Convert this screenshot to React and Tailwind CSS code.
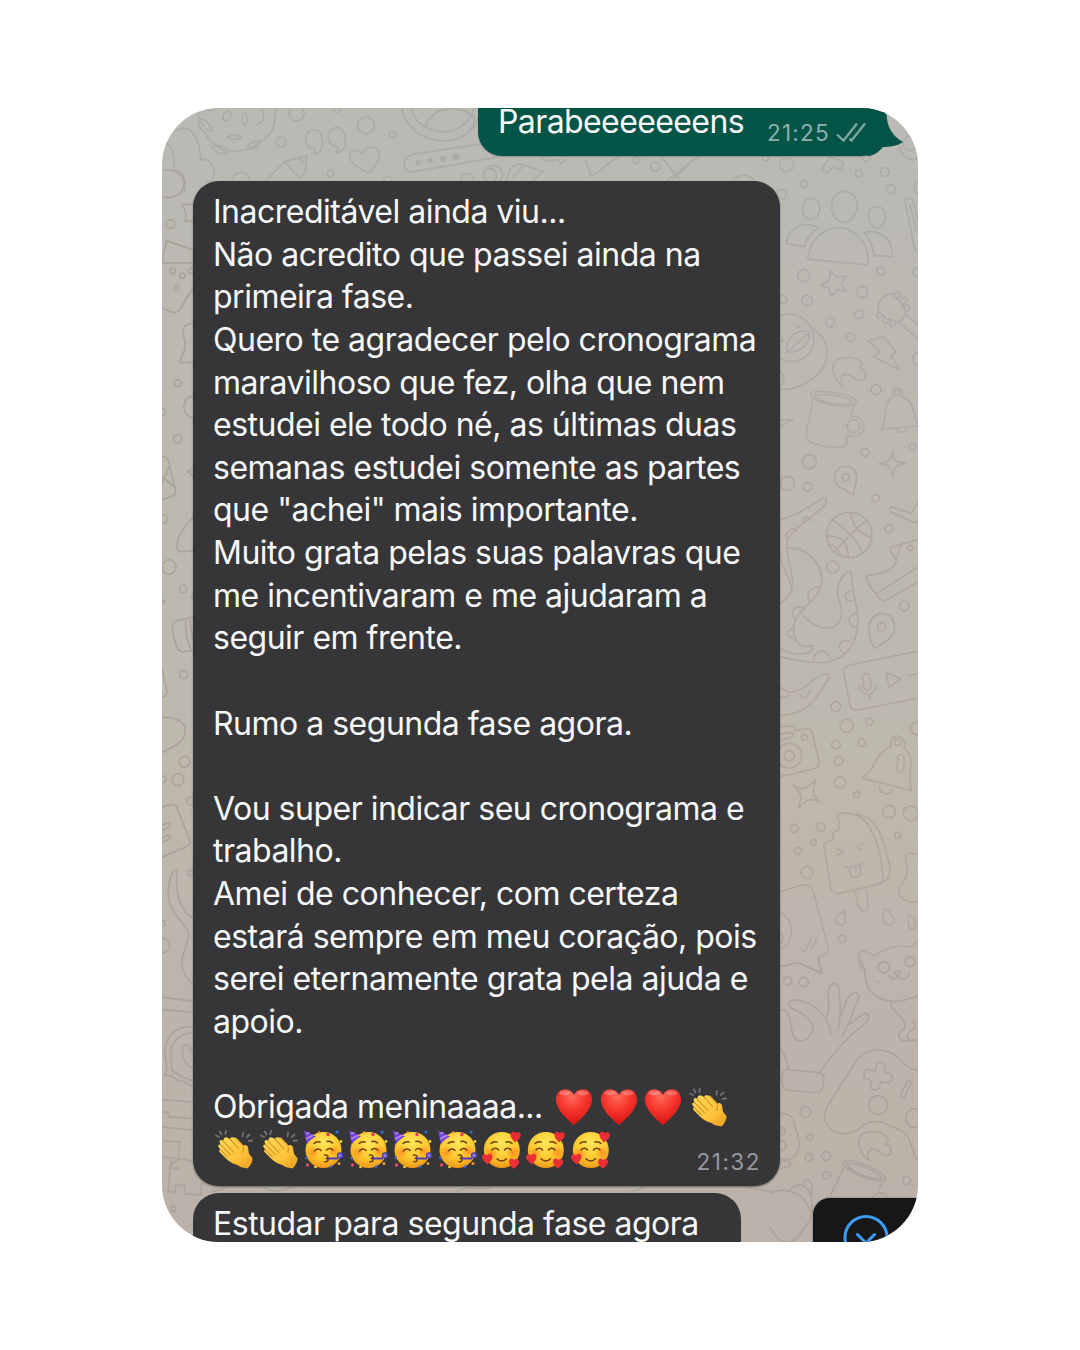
import React from "react";

const MESSAGE = [
  "Inacreditável ainda viu...",
  "Não acredito que passei ainda na",
  "primeira fase.",
  "Quero te agradecer pelo cronograma",
  "maravilhoso que fez, olha que nem",
  "estudei ele todo né, as últimas duas",
  "semanas estudei somente as partes",
  'que "achei" mais importante.',
  "Muito grata pelas suas palavras que",
  "me incentivaram e me ajudaram a",
  "seguir em frente.",
  "",
  "Rumo a segunda fase agora.",
  "",
  "Vou super indicar seu cronograma e",
  "trabalho.",
  "Amei de conhecer, com certeza",
  "estará sempre em meu coração, pois",
  "serei eternamente grata pela ajuda e",
  "apoio.",
  "",
];

function EmojiDefs() {
  return (
    <svg className="absolute h-0 w-0" aria-hidden="true">
      <defs>
        <radialGradient id="heartFill" cx="0.45" cy="0.2" r="0.85">
          <stop offset="0" stopColor="#ff6a5c" />
          <stop offset="0.45" stopColor="#f6352c" />
          <stop offset="1" stopColor="#cf0f10" />
        </radialGradient>
        <radialGradient id="faceFill" cx="0.5" cy="0.3" r="0.72">
          <stop offset="0" stopColor="#ffe65a" />
          <stop offset="0.6" stopColor="#fdc92f" />
          <stop offset="1" stopColor="#ee9418" />
        </radialGradient>
        <radialGradient id="blush">
          <stop offset="0" stopColor="#ff7a1c" stopOpacity="0.75" />
          <stop offset="1" stopColor="#ff8a1c" stopOpacity="0" />
        </radialGradient>
        <linearGradient id="handFill" x1="0" y1="0" x2="1" y2="1">
          <stop offset="0" stopColor="#ffd95a" />
          <stop offset="0.65" stopColor="#fcc23a" />
          <stop offset="1" stopColor="#e99a1c" />
        </linearGradient>
        <path
          id="heartShape"
          d="M19 37.5C15 33 1 23 1 11.5C1 5.5 5 1.3 10 1.3C14 1.3 17.300 3.500 19 7C20.700 3.500 24 1.300 28 1.300C33 1.300 37 5.500 37 11.500C37 23 23 33 19 37.500Z"
        />
      </defs>
    </svg>
  );
}

const emojiClass = "h-[38px] w-[38px] shrink-0 overflow-visible";

function Heart() {
  return (
    <svg viewBox="0 0 38 38" className={emojiClass} role="img" aria-label="❤️">
      <use href="#heartShape" fill="url(#heartFill)" />
      <ellipse cx="10" cy="5" rx="5.500" ry="2.300" fill="#fff" opacity="0.25" />
      <ellipse cx="28" cy="5" rx="5.500" ry="2.300" fill="#fff" opacity="0.25" />
    </svg>
  );
}

function Clap() {
  return (
    <svg viewBox="0 0 38 38" className={emojiClass} role="img" aria-label="👏">
      <g stroke="#707276" strokeWidth="1.800" strokeLinecap="round" fill="none">
        <path d="M1 5.500L4 7M4.800 1.500L6.500 4.500M11 .8L10.300 4M28 3L27.600 6.500M34.500 4.500L31.800 7M37 10.500L33.500 10.800" />
      </g>
      <path
        d="M18 12C17 8 20 6 22.500 9L30 17C30 15 32 15 33 17L34 24L37.500 28C38 31 35 37 32 38.500L25 36L18 30Z"
        fill="#f0ac2c"
      />
      <path
        d="M3.500 17C2.300 15.300 4.500 13.500 6 15L4.800 12.800C3.800 10.500 6.300 8.800 8 10.700L8.600 9.700C8.500 7.700 11 6.300 12.800 7.800L15 9C16 6.500 18.500 7 20 8.500L28.500 17.500C28 14.500 31 14 32 17C32.500 20 33 22.500 35 25.500L36.500 28.500L31 37C29 38.800 25 37 22.500 35C18 34 14 31.500 10.500 28L5 22.500C3.500 21 4 19.500 5.500 19.800Z"
        fill="url(#handFill)"
      />
      <path
        d="M6 15L15.500 25M8 11L19 22.500M15 9L23.500 18.500M5.500 19.800L12.500 27"
        stroke="#c77a12"
        strokeWidth="1"
        strokeLinecap="round"
        fill="none"
      />
      <path d="M28.500 17.500C28.500 19.500 27.500 21 28 23" stroke="#c77a12" strokeWidth="0.900" fill="none" />
    </svg>
  );
}

function Party() {
  return (
    <svg viewBox="0 0 38 38" className={emojiClass} role="img" aria-label="🥳">
      <circle cx="19.500" cy="20" r="18" fill="url(#faceFill)" />
      <circle cx="9" cy="22" r="6.500" fill="url(#blush)" />
      <circle cx="30" cy="21" r="6.500" fill="url(#blush)" />
      <path d="M0 .5L12 6.500C8.500 8 5 11 3 14.200Z" fill="#6d48d6" />
      <path d="M2 3.500L5.500 2.800M2 9L9.500 5" stroke="#c084f5" strokeWidth="1.600" />
      <g fill="none" stroke="#70400c" strokeWidth="1.500" strokeLinecap="round">
        <path d="M10 13.500C12 11.700 14 11.500 16 12M23 11.500C25 10.800 27 11.300 28.500 13" />
        <path d="M10.500 21C12 18.300 15.500 18.300 17 20.500M22.500 20C24 18 27.300 18 28.800 20.200" />
        <path d="M20.500 25C25 24.500 25 28 21.800 28.300C25 28.500 25 32 20.800 31.700" />
      </g>
      <path d="M23 28.500L34 28.500" stroke="#4a3db8" strokeWidth="2" />
      <circle cx="36" cy="25.500" r="2.500" fill="#8d79d8" stroke="#4a3db8" strokeWidth="1.300" />
      <circle cx="15" cy="2.500" r="1.300" fill="#f39a2c" />
      <circle cx="24" cy="4.500" r="1.700" fill="#e53e5e" />
      <circle cx="33" cy="2" r="1.600" fill="#2f6fd8" />
      <circle cx="37" cy="11.500" r="1.400" fill="#f3d13a" />
      <circle cx="2.500" cy="28" r="1.300" fill="#3569d6" />
      <circle cx="3.500" cy="35" r="1.700" fill="#e5486a" />
      <circle cx="11.500" cy="37" r="1.300" fill="#f2d340" />
      <circle cx="27" cy="36.500" r="1.300" fill="#3f6fe0" />
      <circle cx="35" cy="33.500" r="1.500" fill="#ef9638" />
    </svg>
  );
}

function Smitten() {
  return (
    <svg viewBox="0 0 38 38" className={emojiClass} role="img" aria-label="🥰">
      <circle cx="18.800" cy="20" r="18" fill="url(#faceFill)" />
      <circle cx="8" cy="23.500" r="7" fill="url(#blush)" />
      <circle cx="30" cy="22.500" r="7" fill="url(#blush)" />
      <g fill="none" stroke="#70400c" strokeWidth="1.500" strokeLinecap="round">
        <path d="M8 13.500C10 11.600 12 11.500 14 12M23 12C25.500 11.300 27.500 12 29 13.500" />
        <path d="M9 20C10.500 17.700 14 17.700 15.500 20M21.500 20C23 17.700 26.500 17.700 28 20" />
        <path d="M14 28.800C16.500 31.700 21 31.700 23.500 28.800" />
      </g>
      <use href="#heartShape" fill="#ea2f35" transform="translate(27.500 1) rotate(6) scale(.29)" />
      <use href="#heartShape" fill="#ea2f35" transform="translate(-1.500 24) rotate(-4) scale(.29)" />
      <use href="#heartShape" fill="#ea2f35" transform="translate(26 28) rotate(4) scale(.28)" />
    </svg>
  );
}

function Dots({ items }) {
  return items.map(([x, y, r], i) => <circle key={i} cx={x} cy={y} r={r} />);
}

/* Line-art chat wallpaper. */
function Wallpaper() {
  return (
    <svg
      viewBox="0 0 756 1134"
      className="absolute inset-0 h-full w-full"
      fill="none"
      strokeLinecap="round"
      strokeLinejoin="round"
      strokeWidth="5"
      aria-hidden="true"
    >
      <g stroke="#adaba6">
        <g transform="translate(-2 -8) scale(.33333)">
          <path d="M120 40C110 60 118 90 135 98C150 130 170 140 195 152C230 158 275 152 300 125C340 110 345 70 350 20M122 55C140 60 150 75 158 92C140 92 125 80 122 55M155 140C180 132 200 140 205 158C185 165 165 158 155 140M262 145C265 128 285 122 302 124C295 142 280 150 262 145M190 60C185 40 200 28 214 38C215 55 205 68 190 60M250 40C242 55 245 72 254 78C265 65 264 50 256 40M202 112C215 102 235 104 245 112C235 120 215 120 202 112M290 75C310 68 315 50 305 30M130 25C150 38 170 30 175 20" />
          <path d="M20 130C45 150 45 180 40 210M50 90C90 70 120 110 122 180C145 172 165 195 163 225C160 245 145 250 135 240M10 210C50 205 80 235 75 275" />
          <path d="M487 130C487 150 475 163 460 163C468 155 468 148 462 146C445 146 437 132 437 118C437 100 448 89 463 89C480 89 487 105 487 130M556 122C556 145 545 157 528 157C536 150 536 142 530 139C513 138 504 125 504 110C504 93 515 83 530 83C548 83 556 98 556 122" />
          <path d="M628 219C600 208 570 190 569 165C570 150 595 145 606 162C615 135 655 135 659 160C660 185 640 205 628 219" />
          <path d="M320 240L375 185L440 167C442 195 435 220 422 237L400 215L375 185M418 172C425 185 430 190 438 190" />
          <path d="M725 20C740 110 840 145 910 108C945 88 960 60 960 20M750 20C770 90 840 110 895 85C920 70 940 45 942 20M795 80C815 20 900 10 940 50" />
          <path d="M755 163L990 128M760 215L1010 172M755 163C722 173 725 220 760 215M215 240C225 210 262 212 270 240" />
          <Dots items={[[410,40,23],[531,26,11],[363,126,15],[618,76,25],[698,103,10],[511,220,10],[922,240,20],[683,240,12],[1000,225,28]]} />
          <g fill="#adaba6" stroke="none"><Dots items={[[774,188,8],[811,182,8],[849,177,9],[888,171,10]]} /></g>
        </g>
        <g transform="translate(308 -8) scale(.33333)">
          <path d="M110 240C115 210 125 190 155 193L220 215L190 240M130 235L160 195M210 170C225 195 250 175 265 180C275 190 270 200 285 180M345 180L365 230L450 165M570 165L630 240M595 240L690 165M670 180L610 238M790 240C800 225 840 220 850 240" />
          <path d="M1055 210L1080 170L1120 185L1115 210L1090 200L1075 218ZM1285 130C1300 190 1340 185 1350 165M0 50C15 30 20 70 0 90" />
          <Dots items={[[556,200,14],[500,180,10],[60,226,20],[950,195,21],[887,172,10],[1188,172,12],[1244,216,13],[1167,220,11],[1001,252,10],[1320,130,22]]} />
        </g>
        <g transform="translate(608 72) scale(.33333)">
          <path d="M185 78C185 50 203 34 223 34C247 34 262 53 262 77C260 105 240 127 222 127C200 127 184 103 185 78M97 88C97 66 110 54 124 55C142 56 151 70 150 88C148 107 135 118 123 118C108 118 97 106 97 88M295 107C298 88 310 80 323 81C340 82 348 96 347 112C345 130 330 145 318 145C305 142 294 125 295 107" />
          <path d="M113 235C120 180 160 143 205 143C255 143 295 190 295 245C294 253 290 255 284 254L120 238ZM49 190C55 150 90 118 145 142C120 160 108 180 102 200ZM282 158C330 145 370 180 368 229L312 227C308 195 300 175 282 158" />
          <path d="M181 273L198 291L228 288L215 310L227 334L202 329L184 350L177 325L153 315L177 302ZM405 65C405 52 425 50 430 65L450 150M405 65L435 210L450 225M440 0C430 20 430 40 450 45M420 75L440 150" />
          <path d="M323 382C330 350 350 340 368 342L405 380C410 400 400 425 385 425C355 420 330 410 323 382M405 400L450 440M385 425L450 482M372 347L378 337Q388 333 392 345L382 360M388 365L398 352Q410 350 410 362L395 380M400 385L410 373Q422 373 418 388L408 398M328 393L320 405Q323 415 332 412L340 405M345 410L338 423Q342 432 352 427L360 418M363 422L358 433Q365 442 373 436L378 428" />
          <path d="M293 482L341 470L379 516L363 526L388 569L310 530L331 516ZM219 621C190 595 180 565 195 545C215 525 260 530 278 550L270 563C295 575 290 605 267 602C250 598 245 580 225 582C210 590 210 605 219 621" />
          <path d="M30 407C80 390 130 425 132 475C135 510 105 545 65 545C50 545 40 540 30 537M132 448C175 475 185 535 150 575C120 610 75 630 30 628M50 517C48 475 70 450 118 454C122 490 95 517 50 517L115 460M30 573C48 590 45 605 30 620M30 720L70 718L30 740" />
          <path d="M122 642C125 625 260 640 259 668C250 695 120 670 122 642M134 647C160 638 230 648 248 668C220 680 150 668 134 647M128 660C125 710 105 740 109 772C115 795 190 810 225 797C232 790 228 780 233 768M250 682L242 712C270 700 290 735 278 755C265 775 240 770 231 766" />
          <path d="M333 748C355 720 335 670 368 652L368 645C360 620 400 615 398 645L395 652C430 655 433 710 445 738ZM380 746C385 760 405 760 410 743" />
          <circle cx="250" cy="738" r="19" />
          <Dots items={[[101,12,10],[362,27,14],[35,43,14],[101,287,18],[332,273,12],[277,336,17],[111,362,16],[267,403,13],[180,427,13],[241,472,13],[318,629,15],[442,277,13],[38,358,12],[382,638,8],[450,537,22],[428,800,10],[85,440,3],[37,482,3]]} />
        </g>
      </g>
      <g stroke="#b1a79e">
        <g transform="translate(608 342) scale(.33333)">
          <path d="M251 136L215 115C195 105 190 85 198 67C210 45 240 45 253 60C267 80 255 105 251 136M313 596C302 575 290 545 300 515C312 490 340 483 360 498C375 512 378 535 368 552C355 575 333 582 313 596" />
          <path d="M368 2C368 30 370 35 406 40C375 45 373 50 368 80C363 52 360 45 327 41C360 35 365 30 368 2M362 170L424 190L450 145M362 170C357 180 362 187 370 190L437 220L450 205" />
          <path d="M30 210C90 195 120 165 160 145C170 145 172 153 165 165C120 210 60 240 52 275C45 320 65 350 68 400C68 430 50 450 30 463M55 295C110 290 155 340 155 390C155 440 110 460 85 495C65 520 65 570 95 588C115 595 130 580 130 593C125 620 55 615 30 595M50 265C45 240 70 230 82 245M98 220C92 200 118 195 123 212M30 310C35 365 60 365 65 425M150 412C120 410 105 435 120 455M97 495C150 550 210 545 215 490C215 455 190 430 210 395C220 370 240 355 245 368C240 410 262 455 264 510C262 610 200 640 140 638C100 635 65 630 30 620M240 425C220 425 220 455 245 453M258 490C230 495 230 530 262 533M240 575C205 560 200 600 220 607M183 632C175 590 130 595 130 635M105 475C75 460 55 490 75 508M73 535C45 535 50 570 75 563" />
          <circle cx="238" cy="255" r="68" />
          <path d="M185 207C230 240 265 270 275 310M195 307C220 265 260 240 290 210M242 187C245 225 270 250 303 262M173 258C215 255 235 285 235 322M175 285C200 285 210 305 212 318" />
          <path d="M450 267L360 292C355 305 380 320 378 335C360 375 320 370 290 378C285 395 310 420 330 447C340 455 345 452 355 447L450 392M320 430L450 347M378 333L392 288" />
          <path d="M450 602L240 645C225 650 220 655 221 668L240 765C243 778 250 782 265 780L450 743M278 688C274 665 300 665 300 685L303 705C300 727 280 723 280 705ZM268 708C272 745 318 740 317 705M297 735L300 750M348 667L392 686L358 712ZM418 677L450 670M30 710C60 745 105 715 130 690C155 670 175 665 178 682C145 730 130 790 30 797M90 735C95 750 115 745 120 720M30 740C40 745 50 742 58 735" />
          <Dots items={[[118,35,21],[285,7,12],[52,100,21],[113,110,13],[227,82,11],[317,145,11],[357,236,12],[188,351,18],[403,468,14],[335,530,12],[420,294,8]]} />
        </g>
        <g transform="translate(608 592) scale(.33333)">
          <path d="M30 80L70 77L78 92L105 87C120 85 127 95 129 105L147 185C147 200 140 205 130 207L30 230M30 103L60 97C75 97 70 110 58 113L30 120" />
          <circle cx="58" cy="167" r="37" /><circle cx="58" cy="167" r="15" />
          <path d="M70 255C98 275 110 265 138 240C127 275 125 288 150 308C120 290 110 300 86 322C98 290 95 280 70 255M275 234C320 210 310 160 365 138C350 95 415 100 402 145C445 180 405 230 425 272ZM328 258C330 285 360 290 368 267M382 170C395 155 408 170 402 195C398 220 385 225 380 210C378 200 386 190 382 170" />
          <path d="M200 343C220 335 245 340 260 345C300 360 330 430 340 530C338 548 330 550 322 553L210 580C190 580 184 575 182 565L162 435C160 425 185 425 190 415L188 400L205 390L208 365ZM260 342C320 350 335 400 360 500C362 535 350 545 322 553M253 573L265 615C270 640 300 635 295 615L288 565M200 446L222 456L203 465M280 430L258 440L278 449M223 500C245 505 260 500 278 490M237 503L242 525C250 535 275 535 272 515L270 497M257 502L258 515" />
          <path d="M223 632C225 655 232 675 210 675C185 665 200 645 223 632M342 624C340 650 335 670 355 676C385 670 370 640 342 624M415 643C415 670 410 685 428 687C445 680 440 660 415 643M450 463C405 455 405 460 408 485C415 510 415 530 390 560C380 590 400 610 450 607" />
          <path d="M30 575L95 555C120 553 125 560 130 575L175 745C175 760 165 765 145 770L155 810M30 635C75 660 75 725 30 750M88 745L103 757L123 718M123 750L140 714M275 810C260 780 265 750 280 752L315 767C350 740 380 735 425 740L450 710M30 700C45 710 40 725 30 730" />
          <Dots items={[[197,20,15],[230,77,20],[298,65,11],[198,133,13],[275,128,11],[206,182,13],[210,247,17],[260,284,9],[103,113,9],[73,385,12],[152,381,13],[130,427,9],[84,453,10],[111,517,18],[357,335,19],[422,340,22],[383,406,9],[217,717,11],[383,127,10],[440,85,19]]} />
        </g>
      </g>
      <g stroke="#aca39b">
        <g transform="translate(608 852) scale(.33333)">
          <path d="M30 20L85 8L155 40L145 0M270 0C275 20 285 20 285 35C285 80 300 115 370 125C400 125 425 115 450 105M372 37C380 28 390 32 392 38L383 48ZM383 48C375 65 360 55 358 45M383 48C390 62 415 60 417 40M362 127C365 160 410 170 405 205C375 220 385 245 410 242L450 240M430 178L435 205C405 215 410 235 420 240" />
          <path d="M183 220C175 170 140 135 85 120C55 118 50 135 65 145C90 155 130 180 129 205C125 235 95 250 80 240C55 220 70 180 50 155C45 148 35 148 30 152M170 170C185 130 165 90 183 75C195 65 208 75 207 90C210 130 215 150 205 210M215 165C225 130 235 100 255 97C275 105 265 120 260 130C245 165 235 200 215 232M235 195C255 185 270 165 285 160C305 165 295 180 285 190C240 225 200 265 150 335M30 265C45 280 50 300 55 325" />
          <path d="M48 328L140 337C160 340 165 350 160 370C155 395 150 400 135 398L45 390C35 380 30 335 48 328" />
          <path d="M450 332C390 325 395 275 330 270C270 268 260 300 235 340L175 435C150 475 170 500 195 515C240 535 265 505 290 490C330 475 350 495 400 515C430 540 425 590 450 610" />
          <path d="M318 320C320 300 345 305 345 318L343 337L360 342C372 350 365 370 352 368L332 366L327 385C320 395 300 390 302 378L305 362L288 357C278 350 280 330 293 328L315 333ZM413 360L424 366L402 415L390 410Z" />
          <path d="M299 603C265 580 255 540 280 520C310 510 345 515 356 540L345 552C370 560 370 590 345 586C325 580 325 563 305 566C290 575 290 590 299 603M30 460C60 460 70 470 75 500C85 530 95 560 80 580C65 600 45 605 30 605M30 500C50 505 48 520 35 525M30 540C52 545 55 565 35 570M30 600C60 590 70 610 55 620L30 625" />
          <path d="M220 605C230 590 350 630 345 660C330 675 215 635 220 605M230 610C260 608 325 635 335 655C300 660 240 635 230 610M220 625L180 710M335 670L328 690M310 710C320 695 345 695 350 710M0 700C30 685 60 690 75 700C110 715 130 755 120 780C100 810 75 850 45 850M60 690C75 670 100 670 115 690C125 710 130 730 125 755M100 670C105 650 130 655 125 700M0 800C20 840 30 845 60 850" />
          <Dots items={[[53,63,12],[101,66,14],[324,435,28],[435,474,28],[106,456,16],[120,531,9],[117,592,11],[169,588,13],[170,646,11],[410,661,12],[341,22,17],[421,5,15],[317,64,1],[326,67,1]]} />
        </g>
        <g transform="translate(-7 62) scale(.33333 .3443)">
          <path d="M20 78C50 85 85 75 88 40C88 15 75 0 55 0M115 100L82 100C88 120 98 120 90 150L115 148M20 270L35 205L115 232M20 270L115 270M20 400C50 415 60 420 75 405L115 340M115 445C85 448 78 460 90 500C95 530 75 545 75 560L115 558M115 655C80 660 75 710 115 722M20 832C35 830 40 840 43 855L60 925C65 940 60 945 50 948L20 958M20 915L42 862M20 890L62 922M115 1008C85 1035 65 1070 65 1095C67 1115 90 1108 115 1106M115 1298L70 1308C50 1315 50 1325 53 1340C60 1375 65 1395 82 1400L115 1395M92 1304C90 1340 95 1370 110 1395M103 1300L115 1370M20 1445L35 1510C38 1525 30 1530 20 1532M115 870L98 875L115 890" />
          <Dots items={[[46,157,13],[53,293,8],[82,307,8],[64,343,7],[108,293,8],[68,619,10],[68,781,12],[22,702,10],[26,1014,12],[42,1153,21],[84,1217,11],[86,1465,12],[113,1240,4],[24,1253,4]]} />
        </g>
        <g transform="translate(-7 592) scale(.33333 .3509)">
          <path d="M20 50C65 45 95 65 90 95C85 125 50 135 20 150M20 305L50 297C62 297 65 305 68 313L105 400C107 412 100 415 90 420L20 447M20 358L38 350C48 350 48 358 40 363L20 372M20 395L38 385C48 383 48 393 40 398L20 405M66 485C55 480 40 505 40 560C45 610 85 630 100 660C105 690 80 720 80 750C85 785 100 800 115 808M66 485C60 550 75 600 115 622M20 847L115 858M20 882L115 890M115 932C60 925 25 965 30 1010C35 1040 40 1050 28 1070C60 1065 60 1090 80 1085L115 1103M115 950C75 945 45 980 48 1015L50 1055L75 1070C90 1075 100 1085 115 1085M85 985C75 1020 95 1045 115 1050M85 985L100 983L115 1010M20 1138L115 1147M20 1173L38 1175L42 1188L115 1193M20 1217L115 1226M20 1255L75 1260L70 1308L20 1302M70 1308L45 1330L40 1400L60 1404L62 1382L90 1384L88 1408L138 1410L140 1380M70 1308L115 1315M50 1312L45 1333L72 1335" />
          <Dots items={[[89,176,16],[69,227,17],[106,288,11],[24,226,9],[107,493,8],[24,700,20],[22,636,8],[54,1450,8]]} />
        </g>
        <path d="M50 1084C60 1082 65 1078 70 1078M100 1078C112 1088 125 1080 135 1078M295 1084C305 1075 320 1084 330 1079M470 1084L485 1078M580 1077C590 1083 600 1080 610 1084" strokeWidth="1.500" />
      </g>
    </svg>
  );
}

export default function App() {
  return (
    <main className="flex h-[1350px] w-[1080px] justify-center overflow-hidden bg-white pt-[108px] font-[Inter,'Noto_Sans',sans-serif] text-[32px] leading-[42.64px] tracking-[-0.5px] text-[#f7f7f7]">
      <EmojiDefs />
      <section className="relative h-[1134px] w-[756px] overflow-hidden rounded-[57px] bg-linear-to-b from-[#bab9b4] via-[#beb9ae] to-[#bbb1a8]">
        <Wallpaper />
        <div className="relative flex h-full flex-col items-start pl-[31px]">
          <div className="relative mr-[33px] h-[48px] w-[407px] shrink-0 self-end rounded-b-[24px] bg-[#045447] shadow-[0_1px_1px_rgba(60,60,50,0.3)]">
            <div className="flex h-[42px] items-end whitespace-nowrap pl-[20px]">
              <span className="w-[269px] leading-[56px] tracking-[-0.600px]">Parabeeeeeeens</span>
              <span className="text-[22.500px] leading-[34px] tracking-[1.200px] text-[#8eb0a8]">21:25</span>
              <svg viewBox="0 0 30 20" className="mb-[8px] ml-[6px] h-[20px] w-[30px] overflow-visible" fill="none" stroke="#7fa79d" strokeWidth="2.300">
                <path d="M1 12.500L7.500 18.500L21 1.500M13.500 16.500L15.500 18.500L29 1.500" />
              </svg>
            </div>
            <svg viewBox="0 0 36 48" className="absolute -right-[18px] top-0 h-[48px] w-[36px]" fill="#045447">
              <path d="M0 0H20C18 14 23 27 36 34C31 38 22 39 16 39C11 45 6 48 0 48Z" />
            </svg>
          </div>

          <article className="relative mt-[25px] h-[1005px] w-[587px] shrink-0 rounded-[26px] bg-[#363638] pl-[20px] pt-[10px] shadow-[0_1px_2px_rgba(50,45,40,0.55)]">
            {MESSAGE.map((line, i) => (
              <p key={i} className="h-[42.64px] whitespace-nowrap">
                {line}
              </p>
            ))}
            <div className="flex h-[42.64px] items-center whitespace-nowrap">
              <span className="w-[342px]">Obrigada meninaaaa...</span>
              <div className="-mt-px flex gap-[6.600px]">
                <Heart />
                <Heart />
                <Heart />
                <Clap />
              </div>
            </div>
            <div className="-mt-px flex h-[42.64px] items-center gap-[6.600px] pl-[2px]">
              <Clap />
              <Clap />
              <Party />
              <Party />
              <Party />
              <Party />
              <Smitten />
              <Smitten />
              <Smitten />
            </div>
            <time className="absolute bottom-[8px] right-[19px] text-[22.500px] leading-[32px] tracking-[1.500px] text-[#98989e]">21:32</time>
          </article>

          <article className="mt-[7px] h-[80px] w-[548px] shrink-0 whitespace-nowrap rounded-t-[26px] bg-[#363638] pl-[20px] pt-[10px]">
            Estudar para segunda fase agora
          </article>
        </div>
        <div className="absolute bottom-0 right-0 flex h-[44px] w-[105px] overflow-hidden rounded-tl-[17px] bg-[#171717] pl-[29px] pt-[15px] shadow-[0_0_2px_rgba(40,40,40,0.6)]">
          <svg viewBox="0 0 48 48" className="h-[48px] w-[48px] shrink-0" fill="none" stroke="#3b9df5" strokeWidth="3" strokeLinecap="round" strokeLinejoin="round">
            <circle cx="24" cy="24.500" r="21" />
            <path d="M15.500 21.500L24 30L32.500 21.500" />
          </svg>
        </div>
      </section>
    </main>
  );
}
